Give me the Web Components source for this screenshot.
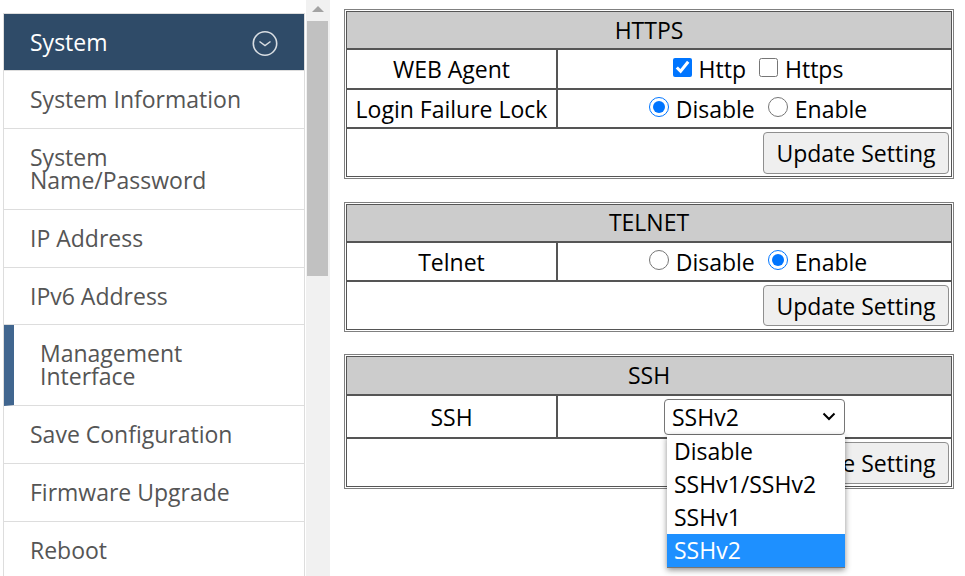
<!DOCTYPE html>
<html>
<head>
<meta charset="utf-8">
<title>Management Interface</title>
<style>
html, body { margin: 0; height: 576px; overflow: hidden; background: #fff; }
body { display: flex; font-family: "Open Sans", sans-serif; }
</style>
</head>
<body>
<side-nav>
  <nav-item head>System</nav-item>
  <nav-item>System Information</nav-item>
  <nav-item>System Name/Password</nav-item>
  <nav-item>IP Address</nav-item>
  <nav-item style="padding-bottom:16px">IPv6 Address</nav-item>
  <nav-item active>Management Interface</nav-item>
  <nav-item>Save Configuration</nav-item>
  <nav-item>Firmware Upgrade</nav-item>
  <nav-item>Reboot</nav-item>
</side-nav>
<side-scroll></side-scroll>
<main-area>
  <setting-panel heading="HTTPS">
    <setting-row label="WEB Agent" style="--row-h:38px">
      <check-opt checked>Http</check-opt>
      <check-opt>Https</check-opt>
    </setting-row>
    <setting-row label="Login Failure Lock" style="--row-h:37px">
      <radio-opt checked>Disable</radio-opt>
      <radio-opt>Enable</radio-opt>
    </setting-row>
    <update-row></update-row>
  </setting-panel>
  <setting-panel heading="TELNET" style="--head-line:35px">
    <setting-row label="Telnet" style="--row-h:37px">
      <radio-opt>Disable</radio-opt>
      <radio-opt checked>Enable</radio-opt>
    </setting-row>
    <update-row style="--btn-h:41px;--btn-pad:3px"></update-row>
  </setting-panel>
  <setting-panel heading="SSH" style="--head-h:37px;margin-top:-1px">
    <setting-row label="SSH" style="--row-h:41px">
      <ssh-select></ssh-select>
    </setting-row>
    <update-row></update-row>
  </setting-panel>
</main-area>

<script>
class SideNav extends HTMLElement {
  constructor() {
    super();
    this.attachShadow({ mode: "open" });
    this.shadowRoot.innerHTML = `
    <style>
      :host {
        display: block;
        flex: none;
        box-sizing: border-box;
        width: 302px;
        height: 563px;
        margin: 13px 0 0 3px;
        border: 1px solid #ddd;
        border-bottom: none;
        overflow: hidden;
      }
    </style>
    <slot></slot>`;
  }
}

class NavItem extends HTMLElement {
  constructor() {
    super();
    this.attachShadow({ mode: "open" });
    this.shadowRoot.innerHTML = `
    <style>
      :host {
        display: block;
        box-sizing: border-box;
        padding: 17px 60px 17px 26px;
        font-size: 23px;
        line-height: 23px;
        color: #555;
        border-bottom: 1px solid #ddd;
        position: relative;
      }
      :host([head]) {
        height: 57px;
        background: #2f4b68;
        color: #fff;
      }
      :host([active]) {
        margin-left: -1px;
        border-left: 11px solid #41668f;
      }
      svg { position: absolute; right: 26px; top: 16px; display: none; }
      :host([head]) svg { display: block; }
    </style>
    <slot></slot>
    <svg width="26" height="26" viewBox="0 0 26 26" fill="none" stroke="#d8dde2">
      <circle cx="13" cy="13.5" r="11.7" stroke-width="1.6"/>
      <path d="M7.5 11.5l5.5 4 5.5-4" stroke-width="1.5"/>
    </svg>`;
  }
}

class SideScroll extends HTMLElement {
  constructor() {
    super();
    this.attachShadow({ mode: "open" });
    this.shadowRoot.innerHTML = `
    <style>
      :host {
        display: flex;
        flex-direction: column;
        align-items: center;
        flex: none;
        width: 24px;
        height: 576px;
        margin-left: 1px;
        background: #f1f1f1;
      }
      .arrow {
        margin-top: 6px;
        width: 0;
        height: 0;
        border: 6px solid transparent;
        border-top: none;
        border-bottom: 6px solid #a3a3a3;
      }
      .thumb { width: 21px; height: 255px; background: #c1c1c1; margin: 9px 1px 0 0; }
    </style>
    <div class="arrow"></div>
    <div class="thumb"></div>`;
  }
}

class MainArea extends HTMLElement {
  constructor() {
    super();
    this.attachShadow({ mode: "open" });
    this.shadowRoot.innerHTML = `
    <style>
      :host {
        display: flex;
        flex-direction: column;
        gap: 23px;
        flex: none;
        box-sizing: border-box;
        width: 610px;
        margin-left: 14px;
        padding-top: 9px;
        font-size: 23px;
        color: #000;
      }
    </style>
    <slot></slot>`;
  }
}

class SettingPanel extends HTMLElement {
  constructor() {
    super();
    this.attachShadow({ mode: "open" });
    this.shadowRoot.innerHTML = `
    <style>
      :host {
        display: block;
        box-sizing: border-box;
        border: 1px solid #808080;
        padding: 1px;
      }
      .inner { border: 1px solid #555; }
      .head {
        height: var(--head-h, 36px);
        line-height: var(--head-line, 36px);
        text-align: center;
        background: #ccc;
        border-bottom: 2px solid #555;
      }
    </style>
    <div class="inner">
      <div class="head"></div>
      <slot></slot>
    </div>`;
  }
  connectedCallback() {
    this.shadowRoot.querySelector(".head").textContent = this.getAttribute("heading");
  }
}

class SettingRow extends HTMLElement {
  constructor() {
    super();
    this.attachShadow({ mode: "open" });
    this.shadowRoot.innerHTML = `
    <style>
      :host {
        display: flex;
        height: var(--row-h, 38px);
        border-bottom: 2px solid #555;
      }
      .label {
        flex: none;
        box-sizing: border-box;
        width: 211px;
        display: flex;
        align-items: center;
        justify-content: center;
        border-right: 2px solid #555;
      }
      .value {
        flex: 1;
        display: flex;
        align-items: center;
        justify-content: center;
        gap: 6px;
      }
    </style>
    <div class="label"></div>
    <div class="value"><slot></slot></div>`;
  }
  connectedCallback() {
    this.shadowRoot.querySelector(".label").textContent = this.getAttribute("label");
  }
}

class CheckOpt extends HTMLElement {
  constructor() {
    super();
    this.attachShadow({ mode: "open" });
    this.shadowRoot.innerHTML = `
    <style>
      :host { display: inline-flex; align-items: center; gap: 7px; margin-left: 7px; }
      input { width: 19px; height: 19px; margin: 0 0 3px; }
    </style>
    <input type="checkbox">
    <span><slot></slot></span>`;
  }
  connectedCallback() {
    this.shadowRoot.querySelector("input").checked = this.hasAttribute("checked");
  }
}

class RadioOpt extends HTMLElement {
  constructor() {
    super();
    this.attachShadow({ mode: "open" });
    this.shadowRoot.innerHTML = `
    <style>
      :host { display: inline-flex; align-items: center; gap: 7px; margin-left: 7px; }
      input { width: 20px; height: 20px; margin: 0 0 3px; }
    </style>
    <input type="radio">
    <span><slot></slot></span>`;
  }
  connectedCallback() {
    this.shadowRoot.querySelector("input").checked = this.hasAttribute("checked");
  }
}

class UpdateRow extends HTMLElement {
  constructor() {
    super();
    this.attachShadow({ mode: "open" });
    this.shadowRoot.innerHTML = `
    <style>
      :host {
        display: flex;
        justify-content: flex-end;
        padding: 3px 2px var(--btn-pad, 2px) 0;
      }
      button {
        box-sizing: border-box;
        width: 186px;
        height: var(--btn-h, 42px);
        padding: 0;
        font: inherit;
        color: #000;
        background: #efefef;
        border: 1px solid #8f8f8f;
        border-radius: 4px;
      }
    </style>
    <button>Update Setting</button>`;
  }
}

class SshSelect extends HTMLElement {
  constructor() {
    super();
    this.attachShadow({ mode: "open" });
    this.shadowRoot.innerHTML = `
    <style>
      :host { display: block; position: relative; width: 181px; height: 36px; }
      .box {
        box-sizing: border-box;
        height: 36px;
        padding: 0 8px 0 7px;
        display: flex;
        align-items: center;
        justify-content: space-between;
        background: #fff;
        border: 1px solid #767676;
        border-radius: 4px;
      }
      .menu {
        position: absolute;
        top: 36px;
        left: 3px;
        width: 178px;
        background: #fff;
        box-shadow: 0 2px 6px rgba(0,0,0,.45);
        border-bottom: 1px solid #767676;
      }
      .menu div { height: 33px; line-height: 33px; padding-left: 7px; }
      .menu .on { background: #1e90ff; color: #fff; }
    </style>
    <div class="box">
      <span>SSHv2</span>
      <svg width="14" height="9" viewBox="0 0 14 9" fill="none" stroke="#000" stroke-width="2"><path d="M1.5 1.5l5.5 5.5 5.5-5.5"/></svg>
    </div>
    <div class="menu">
      <div>Disable</div>
      <div>SSHv1/SSHv2</div>
      <div>SSHv1</div>
      <div class="on">SSHv2</div>
    </div>`;
  }
}

customElements.define("side-nav", SideNav);
customElements.define("nav-item", NavItem);
customElements.define("side-scroll", SideScroll);
customElements.define("main-area", MainArea);
customElements.define("setting-panel", SettingPanel);
customElements.define("setting-row", SettingRow);
customElements.define("check-opt", CheckOpt);
customElements.define("radio-opt", RadioOpt);
customElements.define("update-row", UpdateRow);
customElements.define("ssh-select", SshSelect);
</script>
</body>
</html>
